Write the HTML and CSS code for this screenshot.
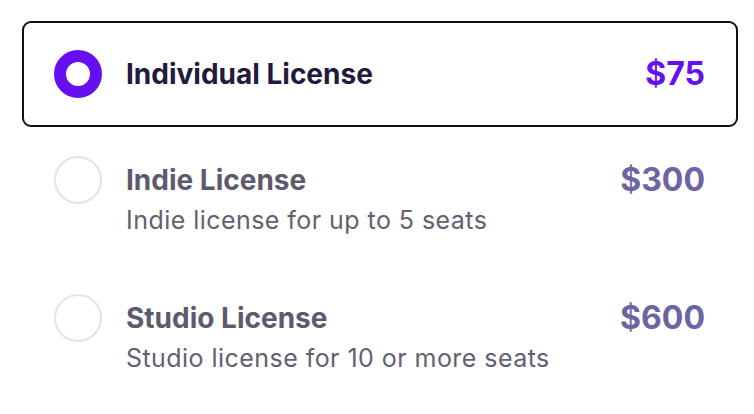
FILE: index.html
```html
<!DOCTYPE html>
<html>
<head>
<meta charset="utf-8">
<link rel="stylesheet" href="styles.css">
</head>
<body>
<div class="options">
  <div class="option selected">
    <span class="radio"></span>
    <div class="info">
      <div class="title">Individual License</div>
    </div>
    <div class="price">$75</div>
  </div>
  <div class="option">
    <span class="radio"></span>
    <div class="info">
      <div class="title">Indie License</div>
      <div class="desc">Indie license for up to 5 seats</div>
    </div>
    <div class="price">$300</div>
  </div>
  <div class="option">
    <span class="radio"></span>
    <div class="info">
      <div class="title">Studio License</div>
      <div class="desc">Studio license for 10 or more seats</div>
    </div>
    <div class="price">$600</div>
  </div>
</div>
</body>
</html>
```
FILE: styles.css
```css
* { box-sizing: border-box; }
body {
  margin: 0;
  background: #fff;
  font-family: Inter, "Noto Sans", sans-serif;
}
.options {
  padding: 21px 16px 0 22px;
  display: flex;
  flex-direction: column;
}
.option {
  display: flex;
  align-items: flex-start;
  gap: 24px;
  padding: 27px 31px 27px 30px;
  border: 2px solid transparent;
  border-radius: 9px;
}
.option.selected {
  border-color: #111;
}
.radio {
  flex: none;
  width: 48px;
  height: 48px;
  border-radius: 50%;
  border: 2px solid #e4e4e6;
  background: #fff;
}
.selected .radio {
  border: 12px solid #6610f2;
}
.info {
  flex: 1;
  display: flex;
  flex-direction: column;
}
.title {
  font-size: 28px;
  font-weight: 700;
  line-height: 48px;
  color: #5f596e;
}
.selected .title { color: #231a3d; }
.desc {
  font-size: 25px;
  line-height: 32px;
  letter-spacing: 0.45px;
  color: #65606f;
}
.price {
  font-size: 32px;
  font-weight: 700;
  line-height: 48px;
  color: #6e64a1;
}
.selected .price { color: #6610f2; }
```
